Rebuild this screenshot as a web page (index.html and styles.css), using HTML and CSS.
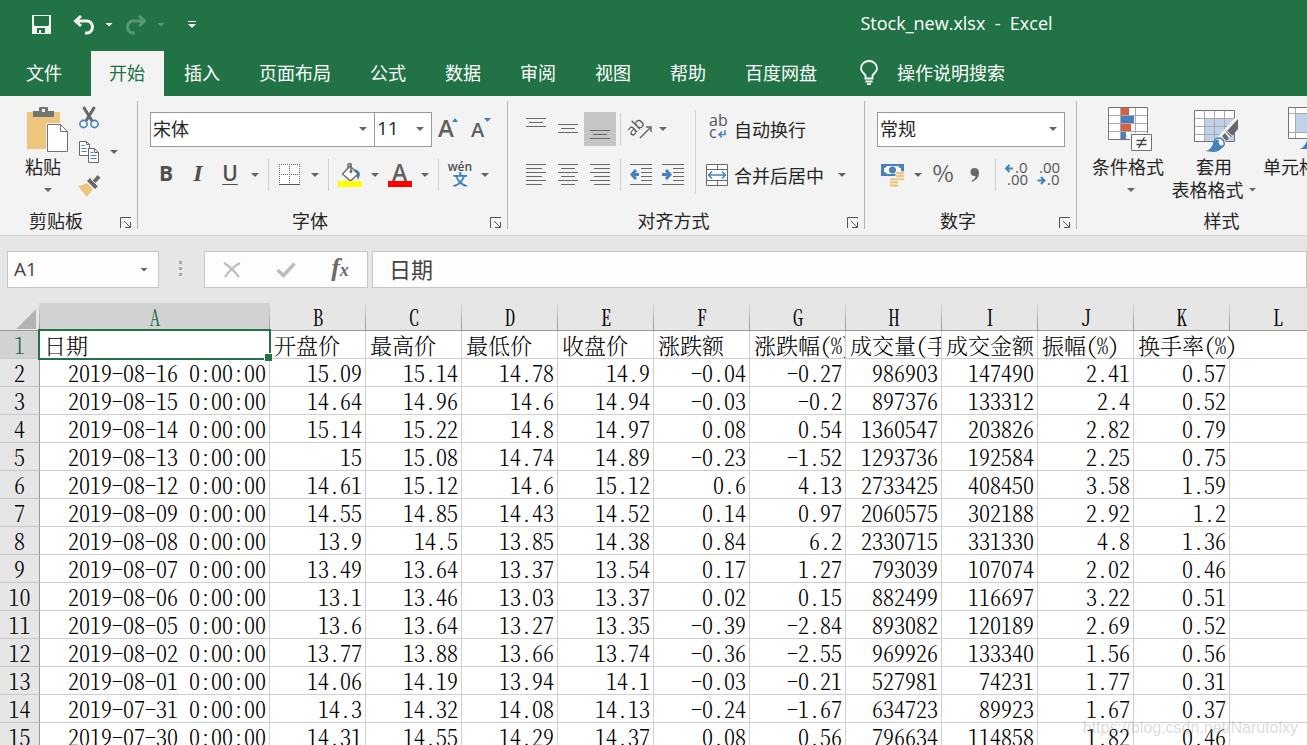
FILE: index.html
```html
<!DOCTYPE html>
<html lang="zh-CN">
<head>
<meta charset="utf-8">
<title>Stock_new.xlsx - Excel</title>
<link rel="stylesheet" href="styles.css">
</head>
<body>
<header class="titlebar">
  <div class="quick">
    <button class="qbtn save" aria-label="保存"><svg width="20" height="20" viewBox="0 0 20 20"><path fill="#f3f3f3" fill-rule="evenodd" d="M0 0h19v19H0zM2 1v9l1 1h13l1-1V1zM5 13v5h2v-3h2v3h4v-5z"/></svg></button>
    <button class="qbtn" aria-label="撤消"><svg width="22" height="20" viewBox="0 0 22 20"><path fill="none" stroke="#f3f3f3" stroke-width="3" d="M8 1L2.500 6L8 11M2.500 6H14a5.500 6 0 0 1 0 12h-2"/></svg></button>
    <button class="qbtn qarrow" aria-label="撤消选项"><span class="tri"></span></button>
    <button class="qbtn dim" aria-label="恢复"><svg width="22" height="20" viewBox="0 0 22 20"><path fill="none" stroke="#fff" stroke-width="3" d="M14 1l5.500 5L14 11M19.500 6H8a5.500 6 0 0 0 0 12h2"/></svg></button>
    <button class="qbtn qarrow dim" aria-label="恢复选项"><span class="tri"></span></button>
    <button class="qbtn custom" aria-label="自定义快速访问工具栏"><svg width="8" height="8" viewBox="0 0 8 8"><path fill="#fff" d="M0 0h8v1H0zM0 3h8L4 7z"/></svg></button>
  </div>
  <h1 class="doc">Stock_new.xlsx&nbsp; -&nbsp; Excel</h1>
</header>
<nav class="tabs">
  <button class="tab file">文件</button>
  <button class="tab active">开始</button>
  <button class="tab">插入</button>
  <button class="tab">页面布局</button>
  <button class="tab">公式</button>
  <button class="tab">数据</button>
  <button class="tab">审阅</button>
  <button class="tab">视图</button>
  <button class="tab">帮助</button>
  <button class="tab">百度网盘</button>
  <button class="tab tell"><svg width="18" height="26" viewBox="0 0 18 26"><path fill="none" stroke="#fff" stroke-width="1.800" d="M5.500 18.500v-3C4 13 1 12 1 8.500a8 7.500 0 0 1 16 0c0 3.500-3 4.500-4.500 7v3zM5.500 21.500h7M7 24.200h4"/></svg>操作说明搜索</button>
</nav>

<main class="ribbon">
  <section class="group clipboard">
    <div class="body">
      <button class="big paste"><svg width="44" height="46" viewBox="0 0 44 46"><path fill="#edc57d" d="M2 5h33v37H2z"/><path fill="#737373" d="M8 10V4h6V1q0-1 1-1h7q1 0 1 1v3h6v6zM17 2v3h3V2z" fill-rule="evenodd"/><path fill="#fff" stroke="#f3f3f3" stroke-width="3" d="M22.500 17.500h13l7 7v20h-20z"/><path fill="#fff" stroke="#737373" d="M22.500 17.500h13l7 7v20h-20z"/><path fill="none" stroke="#737373" d="M35.500 17.500v7h7"/></svg><span>粘贴</span><span class="tri"></span></button>
      <div class="side">
        <button class="tool" aria-label="剪切"><svg width="20" height="24" viewBox="0 0 20 24"><path stroke="#686868" stroke-width="3" d="M4.500 1l8.500 14M15.500 1L7 15"/><g fill="#f3f3f3" stroke="#4681bd" stroke-width="1.600"><circle cx="4.500" cy="18" r="3.600"/><circle cx="15.500" cy="18" r="3.600"/></g></svg></button>
        <div class="pair"><button class="tool" aria-label="复制"><svg width="22" height="24" viewBox="0 0 22 24"><g fill="#fff" stroke="#686868"><path d="M1.500 1.500h7l3 3v11h-10z"/><path d="M10.500 8.500h6l4 4v10h-10z"/></g><path fill="none" stroke="#686868" d="M8.500 1.500v3h3M16.500 8.500v4h4"/><path stroke="#4681bd" d="M3.500 5.500h3M3.500 8.500h5M3.500 11.500h5M12.500 12.500h3M12.500 15.500h6M12.500 18.500h6"/></svg></button><button class="drop" aria-label="复制选项"><span class="tri"></span></button></div>
        <button class="tool" aria-label="格式刷"><svg width="24" height="24" viewBox="0 0 24 24"><path fill="#edc57d" d="M1 12q4 0 9-3l6 6-6 8z"/><path fill="#686868" d="M10 7l3-3 8 8-3 3zM15.500 7l5-6 3 2.500-5 5.500z"/><path stroke="#f3f3f3" d="M14 5l7 7"/></svg></button>
      </div>
    </div>
    <div class="foot"><h2>剪贴板</h2><button class="launch" aria-label="剪贴板设置"><svg width="12" height="12" viewBox="0 0 12 12"><path fill="none" stroke="#555" d="M.5 11V.5H11M4 4l6 6M10.500 5v5.500H5"/></svg></button></div>
  </section>

  <section class="group font">
    <div class="body rows">
      <div class="row">
        <label class="combo family"><select aria-label="字体"><option>宋体</option></select></label>
        <label class="combo size"><select aria-label="字号"><option>11</option></select></label>
        <button class="tool" aria-label="增大字号"><svg width="22" height="34" viewBox="0 0 22 34"><path fill="#4681bd" d="M15 10h6l-3-4z"/><text class="glyph-a" x="1" y="25" font-size="24">A</text></svg></button>
        <button class="tool" aria-label="减小字号"><svg width="22" height="34" viewBox="0 0 22 34"><path fill="#4681bd" d="M15 6h7l-3.500 4z"/><text class="glyph-a" x="2" y="25" font-size="20">A</text></svg></button>
      </div>
      <div class="row">
        <button class="tool b">B</button><button class="tool i">I</button><button class="tool u">U</button><button class="drop" aria-label="下划线选项"><span class="tri"></span></button>
        <i class="sep"></i>
        <button class="tool" aria-label="边框"><svg width="22" height="22" viewBox="0 0 22 22"><path fill="#fff" d="M0 0h21v21H0z"/><path fill="none" stroke="#686868" stroke-dasharray="1 1" d="M0 .5h21M0 10.500h21M.5 0v20M10.500 0v20M20.500 0v20"/><path stroke="#555" d="M0 20.500h21"/></svg></button><button class="drop" aria-label="边框选项"><span class="tri"></span></button>
        <i class="sep"></i>
        <button class="tool" aria-label="填充颜色"><svg width="24" height="24" viewBox="0 0 24 24"><path fill="#4681bd" d="M16 6q6 1 6 6l-2 5q-1-4-4-6z"/><path fill="#fff" stroke="#686868" stroke-width="1.300" d="M12 3l8 8-7.500 7L4.500 11z"/><path fill="none" stroke="#686868" stroke-width="1.500" d="M10 6V2q0-2 3-1v7"/><circle cx="13" cy="8.500" r="1.500" fill="#686868"/><path fill="#ff0" d="M0 18h24v6H0z"/></svg></button><button class="drop" aria-label="填充选项"><span class="tri"></span></button>
        <button class="tool" aria-label="字体颜色"><svg width="24" height="34" viewBox="0 0 24 34"><text class="glyph-a" x="4" y="23" font-size="23">A</text><path fill="red" d="M0 23h24v6H0z"/></svg></button><button class="drop" aria-label="字体颜色选项"><span class="tri"></span></button>
        <i class="sep"></i>
        <button class="tool pinyin"><span>wén</span><span>文</span></button><button class="drop" aria-label="拼音选项"><span class="tri"></span></button>
      </div>
    </div>
    <div class="foot"><h2>字体</h2><button class="launch" aria-label="字体设置"><svg width="12" height="12" viewBox="0 0 12 12"><path fill="none" stroke="#555" d="M.5 11V.5H11M4 4l6 6M10.500 5v5.500H5"/></svg></button></div>
  </section>

  <section class="group align">
    <div class="body">
      <div class="rows">
        <div class="row">
          <button class="tool" aria-label="顶端对齐"><svg width="20" height="22" viewBox="0 0 20 22"><path stroke="#686868" d="M0 .5h20M3 4.500h14M0 8.500h20"/></svg></button><button class="tool" aria-label="垂直居中"><svg width="20" height="22" viewBox="0 0 20 22"><path stroke="#686868" d="M0 6.500h20M3 10.500h14M0 14.500h20"/></svg></button><button class="tool on" aria-label="底端对齐"><svg width="20" height="22" viewBox="0 0 20 22"><path stroke="#686868" d="M0 12.500h20M3 16.500h14M0 20.500h20"/></svg></button>
          <i class="sep"></i>
          <button class="tool" aria-label="方向"><svg width="24" height="24" viewBox="0 0 24 24"><text transform="rotate(-45 9 13)" x="0" y="14" class="ab">ab</text><path fill="none" stroke="#686868" stroke-width="1.500" d="M11 21L22 10M17 10h5v5"/></svg></button><button class="drop tight" aria-label="方向选项"><span class="tri"></span></button>
        </div>
        <div class="row">
          <button class="tool" aria-label="左对齐"><svg width="20" height="22" viewBox="0 0 20 22"><path stroke="#686868" d="M0 .5h20M0 4.500h16M0 8.500h20M0 12.500h16M0 16.500h20M0 20.500h16"/></svg></button><button class="tool" aria-label="居中"><svg width="20" height="22" viewBox="0 0 20 22"><path stroke="#686868" d="M0 .5h20M3 4.500h14M0 8.500h20M3 12.500h14M0 16.500h20M3 20.500h14"/></svg></button><button class="tool" aria-label="右对齐"><svg width="20" height="22" viewBox="0 0 20 22"><path stroke="#686868" d="M0 .5h20M4 4.500h16M0 8.500h20M4 12.500h16M0 16.500h20M4 20.500h16"/></svg></button>
          <i class="sep"></i>
          <button class="tool" aria-label="减少缩进"><svg width="22" height="22" viewBox="0 0 22 22"><path stroke="#686868" d="M0 .5h22M11 4.500h11M11 8.500h11M11 12.500h11M11 16.500h11M0 20.500h22"/><path fill="none" stroke="#4681bd" stroke-width="3" d="M6 6l-4 4.500L6 15M2 10.500h7"/></svg></button><button class="tool" aria-label="增加缩进"><svg width="22" height="22" viewBox="0 0 22 22"><path stroke="#686868" d="M0 .5h22M11 4.500h11M11 8.500h11M11 12.500h11M11 16.500h11M0 20.500h22"/><path fill="none" stroke="#4681bd" stroke-width="3" d="M4 6l4 4.500L4 15M0 10.500h7"/></svg></button>
        </div>
      </div>
      <i class="sep tall"></i>
      <div class="rows">
        <div class="row"><button class="wide"><svg width="24" height="34" viewBox="0 0 24 34"><text class="ab" x="4" y="14">ab</text><text class="ab" x="4" y="26">c</text><path fill="none" stroke="#4681bd" stroke-width="1.500" d="M20 18v4.500h-6M17 19.500l-3 3 3 3"/></svg>自动换行</button></div>
        <div class="row"><button class="wide"><svg width="24" height="24" viewBox="0 0 24 24"><path fill="#fff" stroke="#686868" d="M1.500 1.500h21v21h-21zM1.500 6.500h21M1.500 17.500h21M12.500 1v5.500M12.500 17.500v5"/><path fill="none" stroke="#4681bd" stroke-width="1.500" d="M3.500 12h17M7 8.500L3.500 12 7 15.500M17 8.500l3.500 3.500-3.500 3.500"/></svg>合并后居中</button><button class="drop merge" aria-label="合并选项"><span class="tri"></span></button></div>
      </div>
    </div>
    <div class="foot"><h2>对齐方式</h2><button class="launch" aria-label="对齐设置"><svg width="12" height="12" viewBox="0 0 12 12"><path fill="none" stroke="#555" d="M.5 11V.5H11M4 4l6 6M10.500 5v5.500H5"/></svg></button></div>
  </section>

  <section class="group number">
    <div class="body rows">
      <div class="row"><label class="combo format"><select aria-label="数字格式"><option>常规</option></select></label></div>
      <div class="row">
        <button class="tool" aria-label="会计数字格式"><svg width="24" height="24" viewBox="0 0 24 24"><path fill="#4681bd" d="M0 1h23v12H0z"/><path fill="#fff" d="M3 3h17v8H3z"/><path fill="#4681bd" d="M2 2h4q0 3-3 3H2zM21 2h-4q0 3 3 3h1zM2 12h4q0-3-3-3H2z"/><circle cx="11.500" cy="7" r="3.500" fill="#4681bd"/><g fill="#edc57d" stroke="#f3f3f3" stroke-width=".7"><rect x="14.500" y="8.500" width="9" height="3" rx="1.500"/><rect x="14.500" y="11.500" width="9" height="3" rx="1.500"/><rect x="14.500" y="14.500" width="9" height="3" rx="1.500"/><rect x="8.500" y="15" width="9" height="3" rx="1.500"/><rect x="8.500" y="18" width="9" height="3" rx="1.500"/><rect x="8.500" y="21" width="9" height="3" rx="1.500"/></g></svg></button><button class="drop" aria-label="会计选项"><span class="tri"></span></button>
        <button class="tool pct">%</button>
        <button class="tool" aria-label="千位分隔样式"><svg width="10" height="16" viewBox="0 0 10 16"><path fill="#686868" d="M4.500 1q4.500 0 4.500 5 0 6-7 9l-.5-1q4-2.500 4-5-5 .5-5-4Q.5 1 4.500 1z"/></svg></button>
        <i class="sep"></i>
        <button class="tool" aria-label="增加小数位数"><svg width="26" height="34" viewBox="0 0 26 34"><text class="dec" x="12" y="15">.0</text><text class="dec" x="4" y="27">.00</text><path fill="none" stroke="#4681bd" stroke-width="2" d="M6.500 7L3 10.500 6.500 14M3 10.500h7"/></svg></button>
        <button class="tool" aria-label="减少小数位数"><svg width="26" height="34" viewBox="0 0 26 34"><text class="dec" x="4" y="15">.00</text><text class="dec" x="12" y="27">.0</text><path fill="none" stroke="#4681bd" stroke-width="2" d="M6 19l3.500 3.500L6 26M9.500 22.500h-7"/></svg></button>
      </div>
    </div>
    <div class="foot"><h2>数字</h2><button class="launch" aria-label="数字设置"><svg width="12" height="12" viewBox="0 0 12 12"><path fill="none" stroke="#555" d="M.5 11V.5H11M4 4l6 6M10.500 5v5.500H5"/></svg></button></div>
  </section>

  <section class="group styles">
    <div class="body">
      <button class="big"><svg width="44" height="46" viewBox="0 0 44 46"><path fill="#fff" stroke="#737373" d="M.5.5h39v32H.5z"/><path stroke="#aaa" d="M1 8.500h38M1 16.500h38M1 24.500h38M12.500 1v31M27.500 1v31"/><path fill="#d9603f" d="M13 1h8v7h-8zM13 17h10v7H13z"/><path fill="#4681bd" d="M13 9h13v7H13zM13 25h5v7h-5z"/><path fill="#fff" stroke="#f3f3f3" stroke-width="3" d="M23.500 27.500h20v16h-20z"/><path fill="#fff" stroke="#737373" d="M23.500 27.500h20v16h-20z"/><path stroke="#444" stroke-width="1.300" d="M28.500 33.500h10M28.500 37.500h10M36.500 30l-6 11"/></svg><span>条件格式</span><span class="tri"></span></button>
      <button class="big"><svg width="44" height="46" viewBox="0 0 44 46"><path fill="#fff" stroke="#737373" d="M.5 3.500h40v31H.5z"/><path fill="#bfd2e8" d="M11 12h29v22H11z"/><path stroke="#aaa" d="M1 11.500h39M1 19.500h39M1 27.500h39M10.500 4v30M20.500 4v30M30.500 4v30"/><path stroke="#f3f3f3" stroke-width="9" d="M45 13L27 33"/><path fill="#686868" d="M44 12v10l-7 8-5-5zM31 26l4 5-3 3-4-5z"/><path stroke="#f3f3f3" d="M33 24l5 5"/><path fill="#fff" stroke="#4681bd" stroke-width="1.500" d="M20 38q-1-7 6-7 5 2 4 7-5 6-10 3z"/><path fill="#4681bd" d="M11 44q5 0 8-7 2-5 6-4-2 5 4 6-3 6-10 6z"/></svg><span>套用</span><span class="line">表格格式<span class="tri"></span></span></button>
      <button class="big cell"><svg width="44" height="46" viewBox="0 0 44 46"><path fill="#fff" stroke="#737373" d="M.5.5h40v31H.5z"/><path stroke="#aaa" d="M1 6.500h39M1 25.500h39M7.500 1v30M33.500 1v30"/><path fill="#bfd2e8" d="M8 7h25v18H8z"/><path stroke="#686868" stroke-width="5" d="M43 12L28 29"/><path fill="#4681bd" d="M11 42q5-1 8-8 4-6 8-4l3 4q-4 8-11 8z"/></svg><span>单元格样式</span></button>
    </div>
    <div class="foot"><h2>样式</h2></div>
  </section>
</main>

<div class="formula">
  <label class="combo name"><input aria-label="名称框" value="A1"></label>
  <svg class="grip" width="3" height="16" viewBox="0 0 3 16"><path fill="#a8a8a8" d="M0 0h3v3H0zM0 6h3v3H0zM0 12h3v3H0z"/></svg>
  <div class="fx">
    <button aria-label="取消"><svg width="18" height="16" viewBox="0 0 18 16"><path fill="none" stroke="#bdbdbd" stroke-width="2.200" d="M1 1q8 5 15 14M17 1Q8 6 2 15"/></svg></button>
    <button aria-label="输入"><svg width="20" height="16" viewBox="0 0 20 16"><path fill="none" stroke="#bdbdbd" stroke-width="3.500" d="M1.500 8l6 5.500L18.500 1.500"/></svg></button>
    <button class="fn" aria-label="插入函数">f<small>x</small></button>
  </div>
  <input class="content" aria-label="编辑栏" value="日期">
</div>

<div class="sheet">
<table>
<colgroup><col class="c-num"><col class="c-date"><col><col><col><col><col><col><col><col><col><col><col></colgroup>
<thead><tr><th class="corner"><svg width="20" height="20" viewBox="0 0 20 20"><path fill="#b4b4b4" d="M20 0v20H0z"/></svg></th><th class="sel">A</th><th>B</th><th>C</th><th>D</th><th>E</th><th>F</th><th>G</th><th>H</th><th>I</th><th>J</th><th>K</th><th>L</th></tr></thead>
<tbody>
<tr class="heads"><th class="sel">1</th><td class="cursor">日期</td><td>开盘价</td><td>最高价</td><td>最低价</td><td>收盘价</td><td>涨跌额</td><td class="clip">涨跌幅(%)</td><td class="clip">成交量(手)</td><td>成交金额</td><td>振幅(%)</td><td class="spill">换手率(%)</td><td></td></tr>
<tr><th>2</th><td>2019-08-16 0:00:00</td><td>15.09</td><td>15.14</td><td>14.78</td><td>14.9</td><td>-0.04</td><td>-0.27</td><td>986903</td><td>147490</td><td>2.41</td><td>0.57</td><td></td></tr>
<tr><th>3</th><td>2019-08-15 0:00:00</td><td>14.64</td><td>14.96</td><td>14.6</td><td>14.94</td><td>-0.03</td><td>-0.2</td><td>897376</td><td>133312</td><td>2.4</td><td>0.52</td><td></td></tr>
<tr><th>4</th><td>2019-08-14 0:00:00</td><td>15.14</td><td>15.22</td><td>14.8</td><td>14.97</td><td>0.08</td><td>0.54</td><td>1360547</td><td>203826</td><td>2.82</td><td>0.79</td><td></td></tr>
<tr><th>5</th><td>2019-08-13 0:00:00</td><td>15</td><td>15.08</td><td>14.74</td><td>14.89</td><td>-0.23</td><td>-1.52</td><td>1293736</td><td>192584</td><td>2.25</td><td>0.75</td><td></td></tr>
<tr><th>6</th><td>2019-08-12 0:00:00</td><td>14.61</td><td>15.12</td><td>14.6</td><td>15.12</td><td>0.6</td><td>4.13</td><td>2733425</td><td>408450</td><td>3.58</td><td>1.59</td><td></td></tr>
<tr><th>7</th><td>2019-08-09 0:00:00</td><td>14.55</td><td>14.85</td><td>14.43</td><td>14.52</td><td>0.14</td><td>0.97</td><td>2060575</td><td>302188</td><td>2.92</td><td>1.2</td><td></td></tr>
<tr><th>8</th><td>2019-08-08 0:00:00</td><td>13.9</td><td>14.5</td><td>13.85</td><td>14.38</td><td>0.84</td><td>6.2</td><td>2330715</td><td>331330</td><td>4.8</td><td>1.36</td><td></td></tr>
<tr><th>9</th><td>2019-08-07 0:00:00</td><td>13.49</td><td>13.64</td><td>13.37</td><td>13.54</td><td>0.17</td><td>1.27</td><td>793039</td><td>107074</td><td>2.02</td><td>0.46</td><td></td></tr>
<tr><th>10</th><td>2019-08-06 0:00:00</td><td>13.1</td><td>13.46</td><td>13.03</td><td>13.37</td><td>0.02</td><td>0.15</td><td>882499</td><td>116697</td><td>3.22</td><td>0.51</td><td></td></tr>
<tr><th>11</th><td>2019-08-05 0:00:00</td><td>13.6</td><td>13.64</td><td>13.27</td><td>13.35</td><td>-0.39</td><td>-2.84</td><td>893082</td><td>120189</td><td>2.69</td><td>0.52</td><td></td></tr>
<tr><th>12</th><td>2019-08-02 0:00:00</td><td>13.77</td><td>13.88</td><td>13.66</td><td>13.74</td><td>-0.36</td><td>-2.55</td><td>969926</td><td>133340</td><td>1.56</td><td>0.56</td><td></td></tr>
<tr><th>13</th><td>2019-08-01 0:00:00</td><td>14.06</td><td>14.19</td><td>13.94</td><td>14.1</td><td>-0.03</td><td>-0.21</td><td>527981</td><td>74231</td><td>1.77</td><td>0.31</td><td></td></tr>
<tr><th>14</th><td>2019-07-31 0:00:00</td><td>14.3</td><td>14.32</td><td>14.08</td><td>14.13</td><td>-0.24</td><td>-1.67</td><td>634723</td><td>89923</td><td>1.67</td><td>0.37</td><td></td></tr>
<tr><th>15</th><td>2019-07-30 0:00:00</td><td>14.31</td><td>14.55</td><td>14.29</td><td>14.37</td><td>0.08</td><td>0.56</td><td>796634</td><td>114858</td><td>1.82</td><td>0.46</td><td></td></tr>
</tbody>
</table>
<p class="mark">https://blog.csdn.net/Narutolxy</p>
</div>
</body>
</html>
```

FILE: styles.css
```css
* { box-sizing: border-box; }
body {
  margin: 0;
  height: 100vh;
  overflow: hidden;
  display: flex;
  flex-direction: column;
  background: #e6e6e6;
  color: #262626;
  font-family: "Noto Sans CJK SC", sans-serif;
  font-size: 18px;
  line-height: 23px;
}
button, input, select {
  margin: 0;
  padding: 0;
  border: 0;
  border-radius: 0;
  background: none;
  color: inherit;
  font: inherit;
}
h1, h2, p { margin: 0; font-size: 18px; font-weight: 400; }
svg { display: block; flex: none; overflow: visible; }
.tri {
  display: block;
  flex: none;
  width: 8px;
  height: 4px;
  background: #666;
  clip-path: polygon(0 0, 100% 0, 50% 100%);
}

/* title bar */
.titlebar {
  display: grid;
  grid-template-columns: 1fr auto 1fr;
  flex: none;
  height: 51px;
  background: #217346;
  color: #fff;
}
.quick { display: flex; align-items: center; padding: 0 0 2px 31px; }
.qbtn { display: flex; justify-content: center; width: 22px; }
.save { margin-right: 20px; }
.qarrow { width: 30px; padding-right: 2px; }
.qbtn .tri { background: #fff; }
.dim { opacity: .25; }
.custom { width: 30px; }
.doc {
  grid-column: 3;
  padding: 12px 0 0 207px;
  font-family: "Open Sans", "Noto Sans CJK SC", sans-serif;
  white-space: nowrap;
}

/* ribbon tabs */
.tabs { display: flex; flex: none; height: 45px; background: #217346; }
.tab {
  display: flex;
  align-items: center;
  padding: 0 19px 2px 20px;
  color: #fff;
  white-space: nowrap;
}
.file { padding: 0 29px 2px 26px; }
.active { padding: 0 19px 2px 18px; background: #f3f3f3; color: #217346; }
.tell { gap: 19px; padding-left: 24px; }

/* ribbon */
.ribbon {
  display: flex;
  flex: none;
  height: 140px;
  padding: 5px 0 6px;
  border-bottom: 1px solid #d2d2d2;
  background: #f3f3f3;
}
.group {
  display: flex;
  flex: none;
  flex-direction: column;
  justify-content: space-between;
  border-right: 1px solid #b5b5b5;
}
.body { display: flex; padding-left: 12px; }
.rows { display: flex; flex-direction: column; gap: 12px; }
.body.rows, .align .rows { padding-top: 11px; }
.row { display: flex; align-items: center; height: 34px; }
.foot { display: flex; align-items: center; height: 17px; }
.foot h2 { flex: 1; text-align: center; }
.launch { width: 25px; padding-left: 8px; padding-top: 4px; }
.tool {
  display: flex;
  align-items: center;
  justify-content: center;
  width: 32px;
  height: 34px;
  color: #4f4f4f;
}
.drop { display: flex; align-items: center; justify-content: center; width: 18px; height: 34px; }
.tight { width: 12px; }
.merge { width: 36px; }
.on { background: #c5c5c5; }
.sep { width: 1px; height: 32px; margin: 0 4px; background: #d0d0d0; }
.font .sep { margin: 0 5px 0 4px; }
.tall { height: 84px; margin: 9px 6px 0; }
.big { display: flex; flex-direction: column; align-items: center; width: 86px; padding-top: 6px; }
.big > svg { margin-left: 4px; }
.big > span { margin-top: 2px; white-space: nowrap; }
.big > span + .line { margin-top: 0; }
.big > .tri { margin: 10px 0 0 6px; }
.line { display: flex; align-items: center; gap: 5px; }

.clipboard { width: 138px; }
.clipboard .body { padding-left: 20px; }
.paste { width: 50px; }
.paste > span { margin-right: 4px; }
.paste > .tri { margin-right: 0; }
.side { display: flex; flex-direction: column; padding-left: 3px; }
.pair { display: flex; }
.font { width: 370px; }
.align { width: 357px; }
.number { width: 212px; }
.styles { width: 290px; }
.styles .body { padding-left: 8px; }
.styles .big.cell { width: 102px; }

.combo { display: grid; align-items: center; height: 35px; border: 1px solid #999; background: #fff; }
.combo > * { grid-area: 1 / 1; width: 100%; padding: 0 0 1px 2px; appearance: none; outline: 0; }
.combo::after {
  content: "";
  grid-area: 1 / 1;
  justify-self: end;
  width: 8px;
  height: 4px;
  margin-right: 7px;
  background: #666;
  clip-path: polygon(0 0, 100% 0, 50% 100%);
  pointer-events: none;
}
.family { width: 225px; }
.size { width: 58px; margin-left: -1px; }
.size select, .name input { font-family: "Open Sans", sans-serif; }
.size select { font-size: 19px; }
.format { width: 188px; }

.b, .i, .u { font-family: "Open Sans", sans-serif; font-size: 21px; font-weight: 700; }
.tool.b, .tool.i, .tool.u { padding-bottom: 4px; }
.tool.i { font-family: "Liberation Serif", serif; font-size: 24px; font-style: italic; }
.tool.u { font-weight: 600; text-decoration: underline; text-decoration-thickness: 1px; text-underline-offset: 3px; }
.glyph-a { font-family: "Open Sans", sans-serif; font-weight: 600; fill: #5f5f5f; }
.ab, .dec { font-family: "Open Sans", sans-serif; font-size: 16px; font-weight: 500; fill: #555; }
.dec { font-size: 15px; }
.pinyin {
  flex-direction: column;
  padding-bottom: 4px;
  font-family: "Open Sans", "Noto Sans CJK SC", sans-serif;
  font-size: 12px;
  font-weight: 600;
  line-height: 13px;
}
.pinyin span + span { font-size: 15px; color: #4681bd; }
.tool.pct { padding-bottom: 5px; font-size: 23px; color: #5c5c5c; }
.wide { display: flex; align-items: center; gap: 5px; height: 32px; padding-left: 3px; white-space: nowrap; }

/* formula bar */
.formula { display: flex; flex: none; height: 67px; padding-top: 15px; color: #444; }
.formula .combo, .fx, .content { height: 37px; border: 1px solid #c6c6c6; background: #fdfdfd; }
.formula .name { width: 152px; margin-left: 7px; }
.name input { padding-left: 6px; font-size: 19px; }
.name::after { margin-right: 10px; }
.grip { margin: 10px 22px 0 20px; }
.fx { display: flex; width: 164px; margin-right: 4px; }
.fx button { display: flex; flex: 1; align-items: center; justify-content: center; }
.fx .fn { padding-bottom: 4px; font-family: "Liberation Serif", serif; font-size: 26px; font-style: italic; font-weight: 700; color: #6a6a6a; }
.fn small { padding-top: 5px; font-size: 18px; }
.content { flex: 1; min-width: 0; padding: 0 0 4px 16px; font-size: 22px; }

/* worksheet */
.sheet { position: relative; flex: 1; min-height: 0; overflow: hidden; }
table {
  table-layout: fixed;
  width: 100%;
  border-spacing: 0;
  color: #000;
  font-family: NSimSun, "Noto Serif CJK SC", "Noto Sans CJK SC", monospace;
  font-size: 22px;
  font-weight: 300;
  font-feature-settings: "hwid";
  line-height: 27px;
}
col { width: 96px; }
.c-num { width: 40px; }
.c-date { width: 230px; }
th, td { height: 28px; padding: 0; font-weight: 300; white-space: nowrap; }
th { border-bottom: 1px solid #c8c8c8; border-right: 1px solid #999; background: #e6e6e6; }
thead th {
  border-right: 0;
  border-bottom: 1px solid #999;
  background: linear-gradient(#d8d8d8, #999) right / 1px 100% no-repeat #e6e6e6;
}
td {
  padding: 0 3px;
  border-right: 1px solid #d0d0d0;
  border-bottom: 1px solid #d0d0d0;
  background: #fff;
  text-align: right;
}
.heads td { padding-left: 4px; padding-right: 0; text-align: left; }
td.clip { overflow: hidden; }
.corner svg { margin: 4px 0 0 16px; }
th.sel { background-color: #d2d2d2; color: #217346; }
td.spill { position: relative; border-right-color: transparent; }
td.cursor { position: relative; }
.cursor::before { content: ""; position: absolute; inset: -2px; border: 2px solid #217346; }
.cursor::after {
  content: "";
  position: absolute;
  right: -3px;
  bottom: -3px;
  width: 7px;
  height: 7px;
  border: solid #fff;
  border-width: 1px 0 0 1px;
  background: #217346;
}
.mark {
  position: absolute;
  right: 9px;
  bottom: 6px;
  color: rgba(150, 150, 150, .35);
  font-family: "Liberation Sans", sans-serif;
  font-size: 16px;
}
```
